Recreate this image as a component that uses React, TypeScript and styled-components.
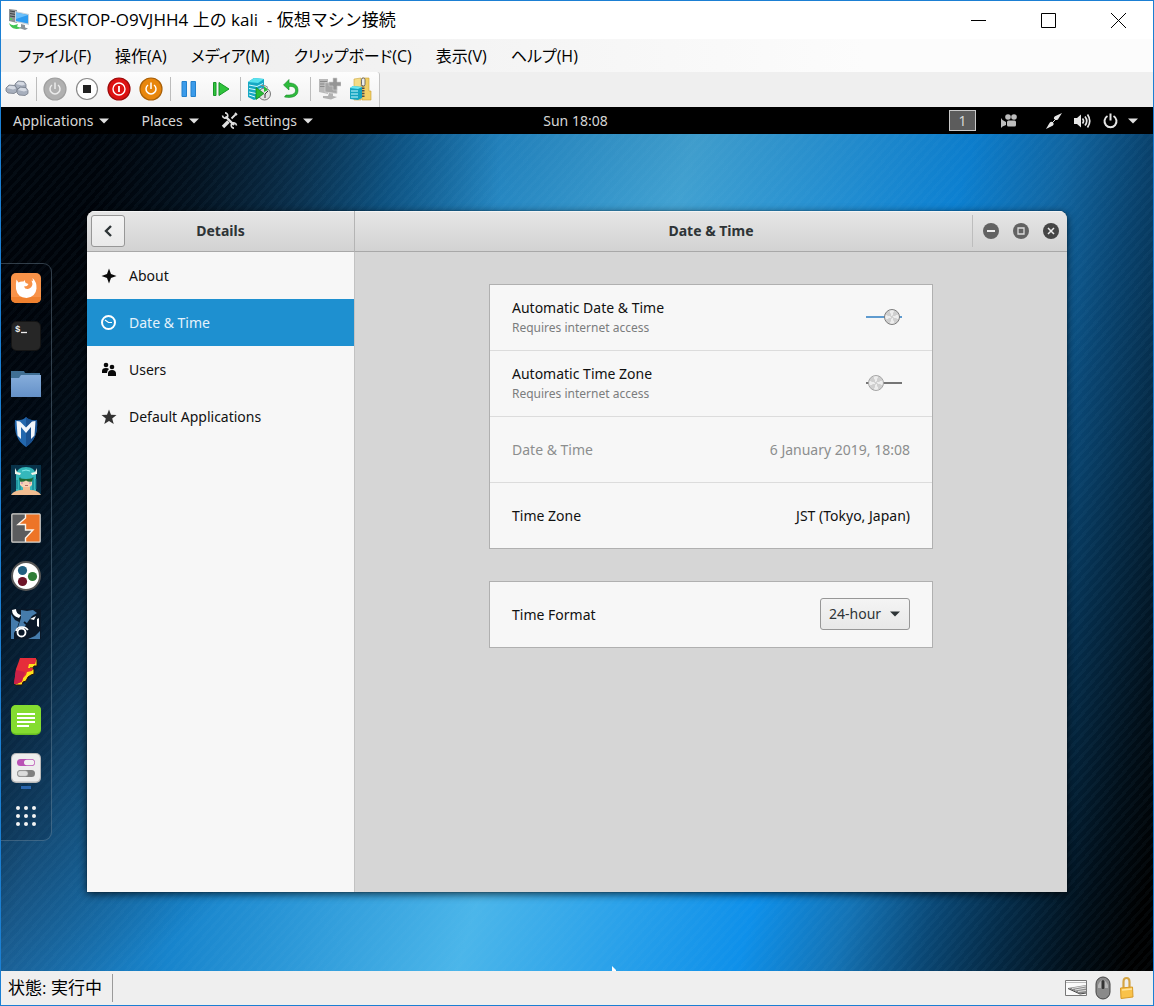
import React from "react";
import styled, { createGlobalStyle } from "styled-components";

const GlobalStyle = createGlobalStyle`
  *, *::before, *::after { box-sizing: border-box; }
  body { margin: 0; }
  button, select, input { font: inherit; color: inherit; margin: 0; }
  button { border: 0; padding: 0; background: none; }
  svg { display: block; flex: none; }
`;

const winFont = `"Open Sans", "Noto Sans CJK JP", sans-serif`;
const gnomeFont = `"Noto Sans", "Open Sans", sans-serif`;

const Frame = styled.div`
  display: flex;
  flex-direction: column;
  min-height: 100vh;
  border: 1px solid #1b7fd3;
  background: #efefef;
  font-family: ${winFont};
  font-size: 16px;
  color: #000;
`;

/* Host window */

const TitleBar = styled.header`
  display: flex;
  align-items: center;
  height: 38px;
  padding-left: 6px;
  background: #fff;
`;

const HostTitle = styled.h1`
  flex: 1;
  margin: 0 0 0 5px;
  font-size: 17px;
  font-weight: 400;
  line-height: 24px;
  white-space: pre;
`;

const HostButton = styled.button`
  display: grid;
  place-items: center;
  width: 70px;
  height: 38px;
`;

const MenuBar = styled.nav`
  display: flex;
  align-items: center;
  gap: 24px;
  height: 33px;
  padding-left: 17px;
  background: linear-gradient(90deg, #efefef 20%, #fcfcfc 75%);
`;

const MenuItem = styled.button`
  font-size: 16px;
  line-height: 24px;
  white-space: nowrap;
  font-feature-settings: "palt";
`;

const ToolBar = styled.div`
  display: flex;
  height: 35px;
`;

const ToolStrip = styled.div`
  display: flex;
  align-items: flex-start;
  padding-right: 2px;
  border-right: 1px solid #c4c4c4;
  border-top-right-radius: 3px;
  background: linear-gradient(#fdfdfd, #f1f1f1);
`;

const ToolButton = styled.button`
  display: grid;
  place-items: center;
  width: 32px;
  height: 34px;
`;

const ToolSeparator = styled.span`
  width: 6px;
  height: 34px;
  background: linear-gradient(#bcbcbc, #bcbcbc) center / 1px 24px no-repeat;
`;

const StatusBar = styled.footer`
  display: flex;
  align-items: center;
  height: 34px;
  padding: 0 18px 0 7px;
  background: #efefef;
`;

const StatusText = styled.span`
  padding-right: 10px;
  border-right: 1px solid #9a9a9a;
  font-size: 17px;
  line-height: 28px;
`;

const StatusIcons = styled.div`
  display: flex;
  align-items: center;
  gap: 8px;
  margin-left: auto;
`;

/* Guest screen */

const Guest = styled.main`
  display: flex;
  flex: 1;
  flex-direction: column;
  font-family: ${gnomeFont};
  font-size: 14px;
`;

const TopBar = styled.div`
  display: grid;
  grid-template-columns: 1fr auto 1fr;
  align-items: center;
  height: 27px;
  padding: 0 15px 0 12px;
  background: #000;
  color: #d6d6d6;
`;

const TopMenus = styled.div`
  display: flex;
  align-items: center;
  gap: 32px;
`;

const TopMenu = styled.button`
  display: flex;
  align-items: center;
  gap: 6px;
  line-height: 20px;
  & + &:last-child { margin-left: -10px; }
`;

const TopTray = styled.div`
  display: flex;
  align-items: center;
  justify-content: flex-end;
`;

const Workspace = styled.button`
  width: 27px;
  height: 21px;
  margin-right: 25px;
  border: 1px solid #c9c9c9;
  background: #5c5c5c;
  line-height: 19px;
`;

const TrayButton = styled.button<{ $gap?: number }>`
  margin-right: ${(p) => p.$gap ?? 0}px;
`;

const Desktop = styled.div`
  position: relative;
  display: flex;
  flex: 1;
  background:
    repeating-linear-gradient(132deg, rgba(120, 190, 230, 0.04) 0 3px, transparent 3px 7px),
    linear-gradient(rgba(0, 20, 40, 0.16), rgba(0, 20, 40, 0) 40%),
    radial-gradient(ellipse 500px 860px at 0 0, rgba(0, 2, 6, 1) 20%, rgba(0, 6, 12, 0.85) 40%, rgba(0, 6, 12, 0) 100%),
    linear-gradient(106deg, #000508 0%, #0c3557 9%, #1b6299 17%, #1784cc 29%, #4bb6ea 50%, #0e90ea 70%, #1473b5 77%, #0a4876 83%, #052c49 88%, #010e18 94%, #000 98%);
`;

const Dock = styled.nav`
  align-self: center;
  width: 51px;
  margin-bottom: 2px;
  border: 1px solid rgba(140, 170, 190, 0.35);
  border-left: 0;
  border-radius: 0 9px 9px 0;
  background: rgba(0, 10, 20, 0.15);
`;

const DockItem = styled.button<{ $running?: boolean }>`
  position: relative;
  display: grid;
  place-items: center;
  width: 50px;
  height: 48px;
  ${(p) =>
    p.$running &&
    `&::after {
      content: "";
      position: absolute;
      left: 20px;
      bottom: 3px;
      width: 10px;
      height: 3px;
      background: #2a66ae;
    }`}
`;

const Pointer = styled.span`
  position: absolute;
  left: 53%;
  bottom: 0;
`;

const AppWindow = styled.section`
  display: grid;
  flex: 1;
  grid-template-columns: 268px 1fr;
  grid-template-rows: 41px 1fr;
  margin: 77px 86px 79px 35px;
  border-radius: 8px 8px 0 0;
  overflow: hidden;
  background: #d6d6d6;
  box-shadow: 0 2px 8px rgba(0, 0, 0, 0.7), 0 0 1px rgba(0, 0, 0, 0.8);
`;

const HeaderPane = styled.header<{ $split?: boolean }>`
  display: grid;
  grid-template-columns: 1fr auto 1fr;
  align-items: center;
  border-bottom: 1px solid #a8a8a8;
  ${(p) => p.$split && "border-right: 1px solid #b4b4b4;"}
  background: linear-gradient(#e6e6e6, #d2d2d2);
  box-shadow: inset 0 1px #f4f4f4;
`;

const HeaderTitle = styled.h2`
  margin: 0;
  font-size: 14px;
  font-weight: 700;
  line-height: 20px;
  color: #2e3436;
`;

const BackButton = styled.button`
  display: grid;
  place-items: center;
  width: 34px;
  height: 32px;
  margin-left: 4px;
  border: 1px solid #979797;
  border-radius: 3px;
  background: linear-gradient(#f4f4f4, #e9e9e9);
`;

const WindowControls = styled.div`
  display: flex;
  align-items: center;
  justify-self: end;
  gap: 14px;
  height: 32px;
  padding: 0 8px 0 10px;
  border-left: 1px solid #bdbdbd;
`;

const ControlButton = styled.button<{ $dark?: boolean }>`
  display: grid;
  place-items: center;
  width: 16px;
  height: 16px;
  border-radius: 50%;
  background: ${(p) => (p.$dark ? "#454545" : "#626262")};
`;

const Sidebar = styled.nav`
  border-right: 1px solid #c2c2c2;
  background: #f7f7f7;
`;

const SidebarItem = styled.button<{ $active?: boolean }>`
  display: flex;
  align-items: center;
  gap: 12px;
  width: 100%;
  height: 47px;
  padding-left: 14px;
  line-height: 20px;
  background: ${(p) => (p.$active ? "#1e90d0" : "transparent")};
  color: ${(p) => (p.$active ? "#e4f2fb" : "#111")};
`;

const Content = styled.div`
  display: flex;
  flex-direction: column;
  align-items: center;
  gap: 32px;
  padding: 32px 24px;
`;

const Card = styled.div`
  width: 100%;
  max-width: 444px;
  border: 1px solid #b0b0b0;
  background: #f7f7f7;
`;

const Row = styled.div<{ $disabled?: boolean }>`
  display: flex;
  align-items: center;
  justify-content: space-between;
  height: 66px;
  padding: 0 22px;
  line-height: 20px;
  color: ${(p) => (p.$disabled ? "#8c8e8e" : "#111")};
  border-bottom: 1px solid #dcdcdc;
  &:last-child { height: 65px; border-bottom: 0; }
`;

const RowLabel = styled.label`
  display: flex;
  flex-direction: column;
`;

const RowHint = styled.small`
  font-size: 12px;
  color: #7b7d7e;
`;

const Switch = styled.input`
  appearance: none;
  display: flex;
  align-items: center;
  width: 36px;
  height: 18px;
  margin: 0 8px 2px 0;
  padding: 0 2px;
  background: linear-gradient(#757575, #757575) center / 100% 2px no-repeat;
  &::before {
    content: "";
    width: 16px;
    height: 16px;
    border: 1px solid #a5a5a5;
    border-radius: 50%;
    background: repeating-conic-gradient(from 20deg, #cfcfcf 0 45deg, #ededed 50deg 85deg, #cfcfcf 90deg);
  }
  &:checked {
    justify-content: flex-end;
    background: linear-gradient(#5f9bcf, #5f9bcf) center / 100% 2px no-repeat;
  }
  &:checked::before { border-color: #7c7c7c; }
`;

const SelectBox = styled.div`
  display: grid;
  align-items: center;
  margin-bottom: 2px;
  > * { grid-area: 1 / 1; }
  > svg { justify-self: end; margin-right: 10px; pointer-events: none; }
`;

const Select = styled.select`
  appearance: none;
  width: 90px;
  height: 32px;
  padding: 0 8px;
  border: 1px solid #979797;
  border-radius: 3px;
  background: linear-gradient(#f4f4f4, #e8e8e8);
  color: #2e3436;
`;

/* Drawings */

const Caret = ({ color = "#e0e0e0" }: { color?: string }) => (
  <svg width="10" height="6" viewBox="0 0 10 6"><path d="M0 .5h10L5 5.500z" fill={color} /></svg>
);

const HostIcon = () => (
  <svg width="24" height="24" viewBox="0 0 24 24">
    <path d="M2 1l8 1v13l-8-2z" fill="#8d9194" /><path d="M3 3l6 1M3 5.500l6 1M3 8l6 1" stroke="#3c4144" />
    <circle cx="4" cy="11" r="1" fill="#4be04b" />
    <path d="M8 3l14 3v11l-14-3z" fill="#c9d3da" /><path d="M9 4.500l12 2.500v8.500l-12-2.500z" fill="#2e9cf0" />
    <path d="M9 4.500l12 2.500-12 4z" fill="#6cc0fa" />
    <path d="M14 16l4 1v2.500l3 1-3 1.500-6-2 2-1z" fill="#8b9398" />
    <path d="M2 15c3 3 6 2.500 9 1l-1 2.500 4 1.500c-5 2-10 1-12-5z" fill="#41c552" />
  </svg>
);

const KeysIcon = () => (
  <svg width="24" height="20" viewBox="0 0 24 20">
    {[[10, 2], [1, 6], [12, 8]].map(([x, y]) => (
      <g key={`${x}-${y}`} stroke="#747b88" strokeWidth=".8">
        <path d={`M${x} ${y + 3}l3-3 6 .5 2 3v3l-3 2-6-.5-2-2z`} fill="#a7afbd" />
        <path d={`M${x + 1} ${y + 3}l2.500-2.300 5 .5 1.500 2.300-3 1z`} fill="#d5dae3" stroke="none" />
      </g>
    ))}
  </svg>
);

const PowerDisc = ({ fill, ring, glyph }: { fill: string; ring: string; glyph: "power" | "stop" | "off" }) => (
  <svg width="24" height="24" viewBox="0 0 24 24" fill="none">
    <circle cx="12" cy="12" r={glyph === "stop" ? 10.5 : 11} fill={fill} stroke={ring} strokeWidth="1.200" />
    {glyph === "power" && <path d="M9 8a5 5 0 1 0 6 0M12 5.500v6.500" stroke="#fff" strokeOpacity={fill === "#b0b0b0" ? 0.75 : 1} strokeWidth="1.500" />}
    {glyph === "stop" && <rect x="8" y="8" width="8" height="8" fill="#222" />}
    {glyph === "off" && <><circle cx="12" cy="12" r="6" stroke="#fff" strokeWidth="1.400" /><path d="M12 9v6" stroke="#fff" strokeWidth="1.800" /></>}
  </svg>
);

const PauseIcon = () => (
  <svg width="16" height="18" viewBox="0 0 16 18" fill="#3b9bea" stroke="#2481cc"><path d="M1 1.500h4.500v15H1zM10 1.500h4.500v15H10z" /></svg>
);

const ResumeIcon = () => (
  <svg width="18" height="16" viewBox="0 0 18 16" fill="#2fc43c" stroke="#189628"><path d="M1.500 1.500h2.500v13H1.500zM7 1.500l10 6.500-10 6.500z" /></svg>
);

const CheckpointIcon = () => (
  <svg width="24" height="24" viewBox="0 0 24 24">
    <path d="M1 5l6-4 10 1v17l-10 4-6-3z" fill="#17a8c4" /><path d="M1 5l6-4 10 1-6 4z" fill="#58e2ee" />
    <path d="M2 8l8 1.500 6-3M2 11.500l8 1.500 5-2M2 15l7 1.500M2 18l6 2" stroke="#d4fbff" fill="none" />
    <circle cx="17.500" cy="17" r="6" fill="#e4e4e4" stroke="#777" /><path d="M18 17l3-3M18 17v4" stroke="#333" />
    <path d="M14 8.500q4-1 7 2" stroke="#888" fill="none" />
    <path d="M9 10.500l8 6-8 6z" fill="#28bd35" stroke="#128220" strokeWidth=".7" /><path d="M17 9l4 4-4 2z" fill="#28bd35" />
  </svg>
);

const RevertIcon = () => (
  <svg width="20" height="20" viewBox="0 0 20 20">
    <path d="M8 .5L2.500 6 8 11V7.500c4-.5 6.500 1 6.500 4 0 3.500-4 5-9.500 4.500L3.500 18c8 1.500 13.500-1 13.500-6.500S13 4 8 4z" fill="#2ebb3d" stroke="#168a26" strokeWidth=".6" />
  </svg>
);

const EnhancedIcon = () => (
  <svg width="24" height="24" viewBox="0 0 24 24">
    <path d="M2 2h9v15l-9-2z" fill="#b9b9b9" /><path d="M3 4.500h7M3 7h7M3 9.500h7" stroke="#8b8b8b" />
    <path d="M8 5.500l12 1v10l-12-1.500z" fill="#a6a6a6" stroke="#d0d0d0" strokeWidth=".8" /><path d="M12 16l4 .5V19l4 1-6 2.500-8-1.500v-2h5z" fill="#b2b2b2" />
    <path d="M16 1h4v4h4v4h-4v4h-4V9h-4V5h4z" fill="#959595" stroke="#d0d0d0" strokeWidth=".6" />
  </svg>
);

const ZipIcon = () => (
  <svg width="24" height="24" viewBox="0 0 24 24">
    <path d="M5 2l7-1v22H5z" fill="#f4dc87" stroke="#cda63e" strokeWidth=".6" /><path d="M13 1h7v13h2v9h-9z" fill="#f0cf66" stroke="#c99d30" strokeWidth=".6" />
    <path d="M14 5v16" stroke="#4d4d4d" strokeWidth="3" strokeDasharray="1.500 1.200" /><rect x="12.500" y="1" width="3.500" height="8" rx="1.700" fill="#ececec" stroke="#555" strokeWidth=".8" />
    <path d="M1 11l3-2 9 1v11l-4 2-8-1z" fill="#14a4c0" /><path d="M1 11l3-2 9 1-4 2z" fill="#6be6f0" /><path d="M2 14h7M2 17h7M2 20h7" stroke="#c9f8ff" />
  </svg>
);

const ToolsIcon = () => (
  <svg width="17" height="17" viewBox="0 0 17 17" fill="none" stroke="#e0e0e0">
    <path d="M4.500 4.500l8.500 8.500" strokeWidth="2.400" />
    <path d="M1.500 3.500a2.800 2.800 0 0 0 4.800 1.800A2.800 2.800 0 0 0 4 .9M15.500 13.500a2.800 2.800 0 0 0-4.800-1.800 2.800 2.800 0 0 0 2.300 4.400" strokeWidth="1.600" />
    <path d="M15.500 1.500l-5 5M14 1l2 2" strokeWidth="1.800" /><path d="M7.500 9.500l-5.500 5.500" strokeWidth="3.400" />
  </svg>
);

const CameraIcon = () => (
  <svg width="16" height="14" viewBox="0 0 16 14" fill="#bdbdbd">
    <circle cx="7" cy="3" r="2.800" /><circle cx="13" cy="3" r="2.800" /><rect x="6" y="6.500" width="9" height="6" rx="1.500" /><path d="M0 4l1.500 2L5 8v3l-3.500 1.500L0 14z" />
  </svg>
);

const PenIcon = () => (
  <svg width="16" height="16" viewBox="0 0 16 16" fill="#e6e6e6">
    <path d="M0 16l3.500-6C4.500 8.500 6 8.500 7 9.500s.8 2.300-.5 3.200z" /><path d="M16 0l-3.500 5.500c-.5 1.500-2 2-3.500 1L8 6c-.3-1.300.2-2.300 1.500-3z" /><path d="M6 10l4-4" stroke="#e6e6e6" />
  </svg>
);

const VolumeIcon = () => (
  <svg width="17" height="16" viewBox="0 0 17 16" fill="none" stroke="#e6e6e6" strokeWidth="1.700">
    <path d="M0 5h3l4-3.500v13L3 11H0z" fill="#e6e6e6" stroke="none" /><path d="M8.500 5.500q2 2.500 0 5M11 3.500q3.500 4.500 0 9M13.500 1.500q4.500 6.500 0 13" />
  </svg>
);

const TrayPowerIcon = () => (
  <svg width="15" height="16" viewBox="0 0 15 16" fill="none" stroke="#e6e6e6" strokeWidth="2"><path d="M4.500 3a6 6 0 1 0 6 0M7.500 .5v7" /></svg>
);

const dockIcons: { name: string; running?: boolean; art: React.ReactNode }[] = [
  { name: "Firefox", art: <>
    <rect width="30" height="30" rx="5" fill="#f89248" /><path d="M0 24h30v1a5 5 0 0 1-5 5H5a5 5 0 0 1-5-5z" fill="#f0812f" />
    <path d="M5.500 6.500l2 3q2-1.500 5-1l1.500-1.500q-.3 2 .8 3l2.700 1-1.500 2-3 .5q1 3 4 2.500 4-1 4.500-5l-1-3.500 1.500.5-.5-3q4.500 4 4 10.500-.8 8.500-10 9.500-9-.5-10.500-9-.5-5 .5-9.500z" fill="#fff" />
  </> },
  { name: "Terminal", art: <>
    <rect x=".5" y=".5" width="29" height="29" rx="5" fill="#262626" stroke="#151515" />
    <text x="4" y="11" fontFamily="Liberation Mono, monospace" fontSize="9" fontWeight="700" fill="#eee">$</text><path d="M10 11.500h6" stroke="#eee" strokeWidth="1.300" />
  </> },
  { name: "Files", art: <>
    <path d="M0 2h13l1 2h15v7H0z" fill="#3f6e93" /><path d="M0 9h8l2-3h20v22H0z" fill="url(#folder)" />
    <defs><linearGradient id="folder" x2="0" y2="1"><stop stopColor="#86addb" /><stop offset="1" stopColor="#6591c8" /></linearGradient></defs>
  </> },
  { name: "Metasploit", art: <>
    <path d="M4 3q7 1 11-3 4 4 11 3c1 12-2 21-11 27C6 24 3 15 4 3z" fill="#2368ae" /><path d="M15 0q4 4 11 3c1 12-2 21-11 27z" fill="#1a5190" />
    <path d="M5.500 4l3.500.5 6 6 6-6 3.500-.5-1 14.500-3.500 3.500V10l-5 6-5-6v12l-3.500-3.500z" fill="#f1f5fa" />
  </> },
  { name: "Armitage", art: <>
    <rect width="30" height="30" fill="#08334a" /><path d="M5 26V10q1-8 10-8t10 8v16z" fill="#35b8bb" /><path d="M6 15v9M9 12v13M22 12v13M25 14v10" stroke="#0f7689" />
    <path d="M9 14h12v6q-6 7-12 0z" fill="#f6d2b5" /><path d="M0 30q3-5 12-5v-3h7v3q8 0 11 5z" fill="#f2bd91" />
    <path d="M8 13q7 2 14 0l-1 3.500q-3 1-6-1-3 2-6 1z" fill="#1d6a32" /><path d="M4 3l2 4 4 1-1 2-5-1zM26 3l-2 4-4 1 1 2 5-1z" fill="#f1f4ea" />
    <path d="M11 6q4-2 8 0" stroke="#87ecec" fill="none" /><path d="M14 20.500h3" stroke="#b36a6a" /><path d="M10 18h2M18 18h2" stroke="#b87cc0" />
  </> },
  { name: "Burp Suite", art: <>
    <rect x="1" y="1" width="28" height="28" fill="#5b5c5e" /><path d="M14.500 1v4L7 11.500h7.500V17H22l-7.500 8v4H29V1z" fill="#ed7427" />
    <path d="M14.500 1v4L7 11.500h7.500V17H22l-7.500 8v4" fill="none" stroke="#fbf3ea" strokeWidth="1.400" />
    <rect x=".8" y=".8" width="28.400" height="28.400" rx="1" fill="none" stroke="#dcd9d4" strokeWidth="1.200" />
  </> },
  { name: "Maltego", art: <>
    <circle cx="15" cy="15" r="14" fill="#fff" stroke="#585858" strokeWidth="2" /><circle cx="11.500" cy="9.500" r="4.600" fill="#205f80" /><circle cx="21.500" cy="15.500" r="4.600" fill="#2f7d37" /><circle cx="11.500" cy="20.500" r="4.600" fill="#6e1428" />
  </> },
  { name: "BeEF", art: <>
    <rect width="30" height="30" fill="#0a1828" /><path d="M0 5l4 6 4 2-2 6-3 5v6H0zM10 1l6 1 6-1 4 3-5 3-5 7-3 5-6-1 3-9z" fill="#457bab" />
    <path d="M1 1q0 6 7 8l2-3Q5 5 5 0zM19 10l6-3-2 4zM28 9v9l-2-1v-7z" fill="#fff" />
    <path d="M29 22v8H17l7-3z" fill="#457bab" /><path d="M13 13l5 4" stroke="#0a1828" strokeWidth="2" />
    <circle cx="10.500" cy="23.500" r="4" fill="#0a1828" stroke="#fff" strokeWidth="1.800" /><path d="M5 22q1-4 6-4 4 0 6 3" stroke="#fff" strokeWidth="1.600" fill="none" />
  </> },
  { name: "Faraday", art: <>
    <path d="M9 2h17v7h-3l-1 2h-3v1h4v5l-3 1-3 2-2 4-3 1-1 3H4v-3z" fill="#ffe21a" stroke="#2a1010" strokeWidth="1" />
    <path d="M9 1h16v3l-1 3h-6l-1 4h5l-1 3-5 1-1 3-3 3-1 4-6 2H3L5 12l3-8z" fill="#e62d3a" /><path d="M5 13l9 2-2 6-1 3-5 3H3z" fill="#cb2148" />
  </> },
  { name: "Notes", art: <>
    <rect width="30" height="30" rx="5" fill="#66bd22" /><rect width="30" height="28.500" rx="5" fill="#84dc30" />
    <path d="M6 9h18M6 13h18M6 17h18M6 21h12" stroke="#fff" strokeWidth="2" />
  </> },
  { name: "Tweaks", running: true, art: <>
    <rect width="30" height="30" rx="5" fill="#b9b9b9" /><rect x="1" y="1" width="28" height="27.500" rx="4.500" fill="#ededed" />
    <rect x="6" y="6" width="18" height="7" rx="3.500" fill="#b952b5" /><rect x="13" y="6.700" width="10.300" height="5.600" rx="2.800" fill="#f1f1f1" />
    <rect x="6" y="17" width="18" height="7" rx="3.500" fill="#818181" /><rect x="6.700" y="17.700" width="10.300" height="5.600" rx="2.800" fill="#dcdcdc" stroke="#999" strokeWidth=".5" />
  </> },
  { name: "Show Applications", art: <>{[7, 15, 23].flatMap((y) => [7, 15, 23].map((x) => <circle key={`${x}-${y}`} cx={x} cy={y} r="2" fill="#f4f4f4" />))}</> },
];

const tools: (React.ReactNode | null)[] = [
  <KeysIcon />, null,
  <PowerDisc fill="#b0b0b0" ring="#9f9f9f" glyph="power" />,
  <PowerDisc fill="#fff" ring="#8b8b8b" glyph="stop" />,
  <PowerDisc fill="#dd1212" ring="#9c0b0b" glyph="off" />,
  <PowerDisc fill="#e8860c" ring="#a96008" glyph="power" />, null,
  <PauseIcon />, <ResumeIcon />, null, <CheckpointIcon />, <RevertIcon />, null, <EnhancedIcon />, <ZipIcon />,
];

const menus = ["ファイル(F)", "操作(A)", "メディア(M)", "クリップボード(C)", "表示(V)", "ヘルプ(H)"];

const sections = [
  { name: "About", icon: <path d="M8 .5l2 5.500 5.500 2-5.500 2-2 5.500L6 10 .5 8 6 6z" fill="#0a0a0a" /> },
  { name: "Date & Time", active: true, icon: <g fill="none" stroke="#fff"><circle cx="7.500" cy="7.500" r="6.500" strokeWidth="2" /><path d="M4 5l3.500 2.500H11" strokeWidth="1.200" /></g> },
  { name: "Users", icon: <g fill="#0a0a0a"><circle cx="5" cy="3" r="2.300" /><circle cx="11" cy="5" r="2.300" /><path d="M1 11V9q0-3 4-3 2 0 3 1-2 1.500-2 4zM7 14v-2.500Q7 8 11 8t4 3.500V14z" /></g> },
  { name: "Default Applications", icon: <path d="M8 .5l2 5.200 5.500.3-4.300 3.500 1.500 5.500L8 12l-4.700 3 1.500-5.500L.5 6 6 5.700z" fill="#333" /> },
];

export default function App() {
  return (
    <Frame>
      <GlobalStyle />
      <TitleBar>
        <HostIcon />
        <HostTitle>{"DESKTOP-O9VJHH4 上の kali  - 仮想マシン接続"}</HostTitle>
        <HostButton aria-label="最小化"><svg width="15" height="15" stroke="#000"><path d="M0 7.500h15" /></svg></HostButton>
        <HostButton aria-label="最大化"><svg width="15" height="15" stroke="#000" fill="none"><path d="M.5 .5h14v14H.5z" /></svg></HostButton>
        <HostButton aria-label="閉じる"><svg width="15" height="15" stroke="#000"><path d="M0 0l15 15M15 0L0 15" /></svg></HostButton>
      </TitleBar>
      <MenuBar>{menus.map((m) => <MenuItem key={m}>{m}</MenuItem>)}</MenuBar>
      <ToolBar>
        <ToolStrip>{tools.map((t, i) => (t ? <ToolButton key={i}>{t}</ToolButton> : <ToolSeparator key={i} />))}</ToolStrip>
      </ToolBar>

      <Guest>
        <TopBar>
          <TopMenus>
            <TopMenu>Applications<Caret /></TopMenu>
            <TopMenu>Places<Caret /></TopMenu>
            <TopMenu><ToolsIcon />Settings<Caret /></TopMenu>
          </TopMenus>
          <time>Sun 18:08</time>
          <TopTray>
            <Workspace>1</Workspace>
            <TrayButton $gap={29} aria-label="Recorder"><CameraIcon /></TrayButton>
            <TrayButton $gap={12} aria-label="Network"><PenIcon /></TrayButton>
            <TrayButton $gap={12} aria-label="Volume"><VolumeIcon /></TrayButton>
            <TrayButton $gap={10} aria-label="Power"><TrayPowerIcon /></TrayButton>
            <Caret />
          </TopTray>
        </TopBar>

        <Desktop>
          <Dock>
            {dockIcons.map((d) => (
              <DockItem key={d.name} aria-label={d.name} $running={d.running}>
                <svg width="30" height="30" viewBox="0 0 30 30">{d.art}</svg>
              </DockItem>
            ))}
          </Dock>

          <AppWindow>
            <HeaderPane $split>
              <BackButton aria-label="Back"><svg width="10" height="14" fill="none" stroke="#2e3436" strokeWidth="2.400"><path d="M8 2L3 7l5 5" /></svg></BackButton>
              <HeaderTitle>Details</HeaderTitle>
            </HeaderPane>
            <HeaderPane>
              <span />
              <HeaderTitle>Date &amp; Time</HeaderTitle>
              <WindowControls>
                <ControlButton aria-label="Minimize"><svg width="8" height="8" stroke="#ececec" strokeWidth="2"><path d="M0 4h8" /></svg></ControlButton>
                <ControlButton aria-label="Maximize"><svg width="8" height="8" stroke="#dcdcdc" strokeWidth="1.300" fill="none"><path d="M1 1h6v6H1z" /></svg></ControlButton>
                <ControlButton $dark aria-label="Close"><svg width="8" height="8" stroke="#ececec" strokeWidth="1.500"><path d="M1 1l6 6M7 1L1 7" /></svg></ControlButton>
              </WindowControls>
            </HeaderPane>

            <Sidebar>
              {sections.map((s) => (
                <SidebarItem key={s.name} $active={s.active}>
                  <svg width="16" height="16" viewBox="0 0 16 16">{s.icon}</svg>
                  {s.name}
                </SidebarItem>
              ))}
            </Sidebar>

            <Content>
              <Card>
                <Row>
                  <RowLabel htmlFor="auto-date">Automatic Date &amp; Time<RowHint>Requires internet access</RowHint></RowLabel>
                  <Switch id="auto-date" type="checkbox" role="switch" defaultChecked />
                </Row>
                <Row>
                  <RowLabel htmlFor="auto-zone">Automatic Time Zone<RowHint>Requires internet access</RowHint></RowLabel>
                  <Switch id="auto-zone" type="checkbox" role="switch" />
                </Row>
                <Row $disabled><span>Date &amp; Time</span><span>6 January 2019, 18:08</span></Row>
                <Row><span>Time Zone</span><span>JST (Tokyo, Japan)</span></Row>
              </Card>
              <Card>
                <Row>
                  <RowLabel htmlFor="time-format">Time Format</RowLabel>
                  <SelectBox>
                    <Select id="time-format" defaultValue="24"><option value="24">24-hour</option><option value="12">AM / PM</option></Select>
                    <Caret color="#2e3436" />
                  </SelectBox>
                </Row>
              </Card>
            </Content>
          </AppWindow>
          <Pointer><svg width="4" height="5"><path d="M0 0l4 4v1H0z" fill="#fff" /></svg></Pointer>
        </Desktop>
      </Guest>

      <StatusBar>
        <StatusText>状態: 実行中</StatusText>
        <StatusIcons>
          <svg width="22" height="18" viewBox="0 0 22 18"><path d="M.5 1.500h21v15H.5z" fill="#fafafa" stroke="#777" /><path d="M1 3.500h20" stroke="#bbb" /><path d="M21 6L3 9l12 5.500 6-1z" fill="#8a8a8a" /><path d="M7 9.500l14-2.500M10 11l11-2M13 12.500l8-1" stroke="#e2e2e2" /><path d="M3 9.500l12 5.500 6-1" stroke="#444" fill="none" /></svg>
          <svg width="16" height="24" viewBox="0 0 16 24"><rect x="1" y="1" width="14" height="22" rx="7" fill="#8a8a8a" stroke="#444" /><path d="M3 9q5-10 10 0v3H3z" fill="#b5b5b5" /><rect x="6.500" y="4" width="3" height="9" rx="1.500" fill="#333" /></svg>
          <svg width="16" height="24" viewBox="0 0 16 24"><path d="M4.500 12V6q0-4 3-4t3 4v6" fill="none" stroke="#d4a545" strokeWidth="2.200" /><path d="M1.500 12l12-1 .5 10-12 1.500z" fill="#f9c24a" stroke="#d79a28" /><path d="M3 14l10-1" stroke="#ffe39a" strokeWidth="1.500" /></svg>
        </StatusIcons>
      </StatusBar>
    </Frame>
  );
}
